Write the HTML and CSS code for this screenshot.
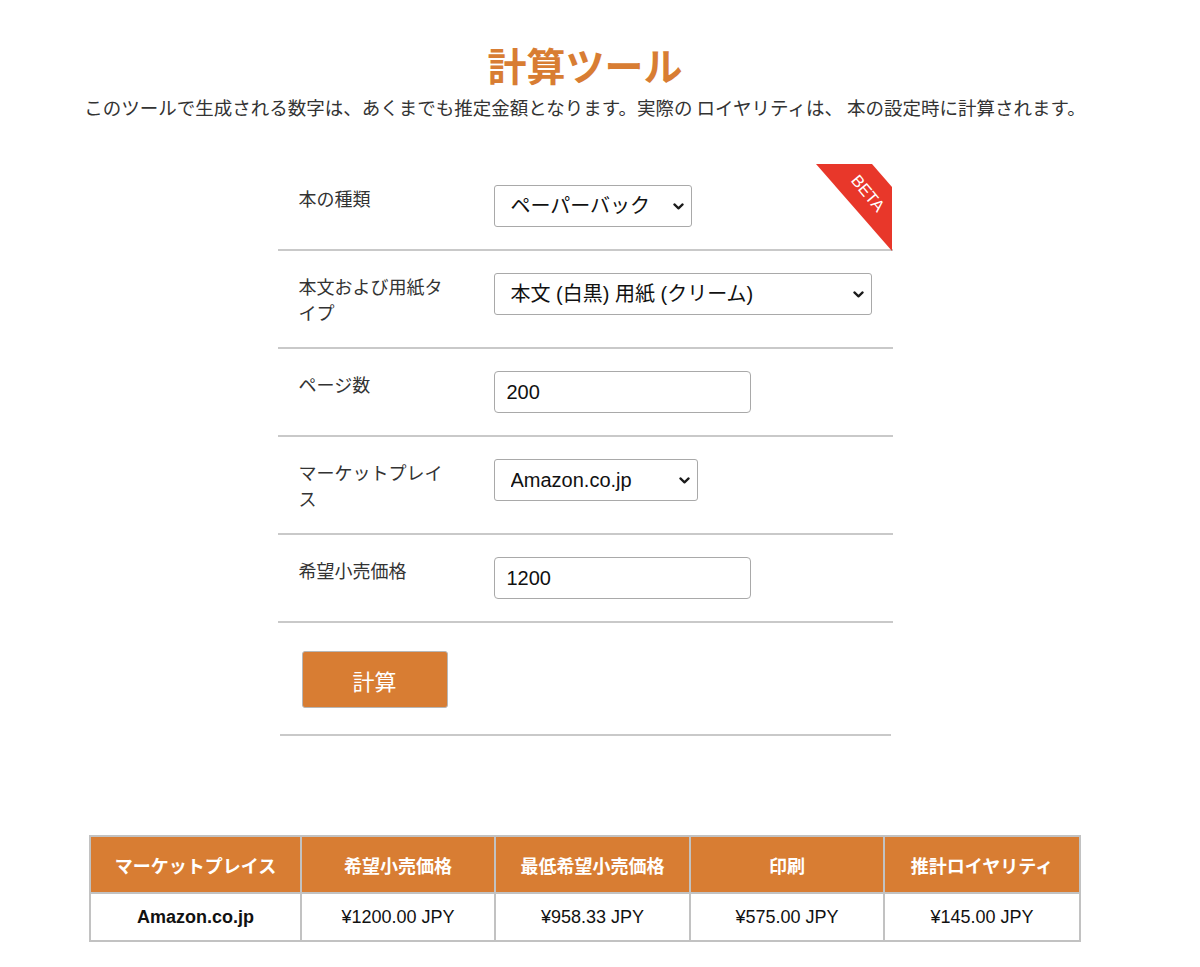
FILE: index.html
```html
<!DOCTYPE html>
<html lang="ja">
<head>
<meta charset="utf-8">
<title>計算ツール</title>
<link rel="stylesheet" href="styles.css">
</head>
<body>
<div class="page">
  <h1 class="title">計算ツール</h1>
  <p class="lead">このツールで生成される数字は、あくまでも推定金額となります。実際の ロイヤリティは、 本の設定時に計算されます。</p>

  <form class="calc">
    <svg class="beta" width="77" height="87" viewBox="0 0 77 87" aria-label="BETA">
      <polygon points="0,0 56,0 76,23 76,87" fill="#e8372a"/>
      <text x="51" y="30" fill="#fff" font-family="Liberation Sans, Arial, sans-serif" font-size="16.5" text-anchor="middle" dominant-baseline="middle" transform="rotate(50 51 30)">BETA</text>
    </svg>

    <div class="row">
      <label class="lbl">本の種類</label>
      <span class="sel w-type">
        <select><option>ペーパーバック</option></select>
        <svg class="chev" width="11" height="7" viewBox="0 0 11 7"><path d="M1.4 1.4 L5.5 5.4 L9.6 1.4" fill="none" stroke="#1a1a1a" stroke-width="2.2" stroke-linecap="round" stroke-linejoin="round"/></svg>
      </span>
    </div>

    <div class="row">
      <label class="lbl">本文および用紙タイプ</label>
      <span class="sel w-paper">
        <select><option>本文 (白黒) 用紙 (クリーム)</option></select>
        <svg class="chev" width="11" height="7" viewBox="0 0 11 7"><path d="M1.4 1.4 L5.5 5.4 L9.6 1.4" fill="none" stroke="#1a1a1a" stroke-width="2.2" stroke-linecap="round" stroke-linejoin="round"/></svg>
      </span>
    </div>

    <div class="row">
      <label class="lbl">ページ数</label>
      <input class="txt" type="text" value="200">
    </div>

    <div class="row">
      <label class="lbl">マーケットプレイス</label>
      <span class="sel w-market">
        <select><option>Amazon.co.jp</option></select>
        <svg class="chev" width="11" height="7" viewBox="0 0 11 7"><path d="M1.4 1.4 L5.5 5.4 L9.6 1.4" fill="none" stroke="#1a1a1a" stroke-width="2.2" stroke-linecap="round" stroke-linejoin="round"/></svg>
      </span>
    </div>

    <div class="row">
      <label class="lbl">希望小売価格</label>
      <input class="txt" type="text" value="1200">
    </div>

    <div class="row row-btn">
      <button type="button" class="btn">計算</button>
    </div>
  </form>

  <table class="result">
    <colgroup>
      <col class="c1"><col class="c2"><col class="c3"><col class="c4"><col class="c5">
    </colgroup>
    <thead>
      <tr>
        <th>マーケットプレイス</th>
        <th>希望小売価格</th>
        <th>最低希望小売価格</th>
        <th>印刷</th>
        <th>推計ロイヤリティ</th>
      </tr>
    </thead>
    <tbody>
      <tr>
        <td class="mk">Amazon.co.jp</td>
        <td>¥1200.00 JPY</td>
        <td>¥958.33 JPY</td>
        <td>¥575.00 JPY</td>
        <td>¥145.00 JPY</td>
      </tr>
    </tbody>
  </table>
</div>
</body>
</html>
```

FILE: styles.css
```css
html, body {
  margin: 0;
  padding: 0;
  background: #fff;
}

body {
  font-family: "Liberation Sans", "Noto Sans CJK JP", sans-serif;
  color: #333;
}

.page {
  width: 1170px;
  padding-top: 41px;
  padding-bottom: 20px;
  display: flex;
  flex-direction: column;
  align-items: center;
}

.title {
  margin: 0;
  font-size: 39px;
  line-height: 46px;
  font-weight: 700;
  color: #d87d33;
  font-family: "Noto Sans CJK JP", sans-serif;
}

.lead {
  margin: 8px 0 0;
  font-size: 18.5px;
  line-height: 24px;
  color: #333;
  font-family: "Noto Sans CJK JP", sans-serif;
  white-space: nowrap;
}

.calc {
  position: relative;
  width: 615px;
  margin-top: 44px;
  display: flex;
  flex-direction: column;
}

.beta {
  position: absolute;
  top: 1px;
  right: 0;
}

.row {
  display: flex;
  align-items: flex-start;
  padding: 22px 0 22px 21px;
  border-bottom: 2px solid #c9c9c9;
}

.lbl {
  width: 160px;
  flex-shrink: 0;
  margin-right: 35px;
  font-size: 18px;
  line-height: 26px;
  color: #333;
  font-family: "Noto Sans CJK JP", sans-serif;
}

.sel {
  position: relative;
  display: inline-block;
  height: 42px;
}

.sel select {
  appearance: none;
  -webkit-appearance: none;
  width: 100%;
  height: 42px;
  box-sizing: border-box;
  border: 1px solid #a9a9a9;
  border-radius: 3px;
  background: #fff;
  padding: 0 30px 0 16px;
  font-family: "Liberation Sans", "Noto Sans CJK JP", sans-serif;
  font-size: 20px;
  color: #111;
  margin: 0;
}

.chev {
  position: absolute;
  right: 8px;
  top: 18px;
  pointer-events: none;
}

.w-type { width: 198px; }
.w-paper { width: 378px; }
.w-market { width: 204px; }

.txt {
  width: 257px;
  height: 42px;
  box-sizing: border-box;
  border: 1px solid #a9a9a9;
  border-radius: 4px;
  padding: 0 12px;
  margin: 0;
  font-family: "Liberation Sans", sans-serif;
  font-size: 20px;
  color: #111;
  background: #fff;
}

.row-btn {
  padding: 28px 0 26px 22px;
  margin: 0 2px;
}

.btn {
  width: 146px;
  height: 57px;
  background: #d87d33;
  border: 1px solid #b7b7b7;
  border-radius: 3px;
  color: #fff;
  font-size: 22px;
  font-family: "Noto Sans CJK JP", sans-serif;
  padding: 0;
  margin: 0;
}

.result {
  margin-top: 99px;
  width: 990px;
  table-layout: fixed;
  border-collapse: collapse;
  border: 2px solid #b9b9b9;
}

.c1 { width: 211px; }
.c2 { width: 194px; }
.c3 { width: 195px; }
.c4 { width: 194px; }
.c5 { width: 196px; }

.result th {
  height: 55px;
  background: #d87d33;
  color: #fff;
  font-size: 18px;
  font-weight: 600;
  font-family: "Noto Sans CJK JP", sans-serif;
  border: 2px solid #c2c2c2;
  text-align: center;
  padding: 0;
}

.result td {
  height: 46px;
  font-size: 18px;
  color: #111;
  text-align: center;
  border: 2px solid #c2c2c2;
  padding: 0;
}

.result td.mk {
  font-weight: 700;
}
```
